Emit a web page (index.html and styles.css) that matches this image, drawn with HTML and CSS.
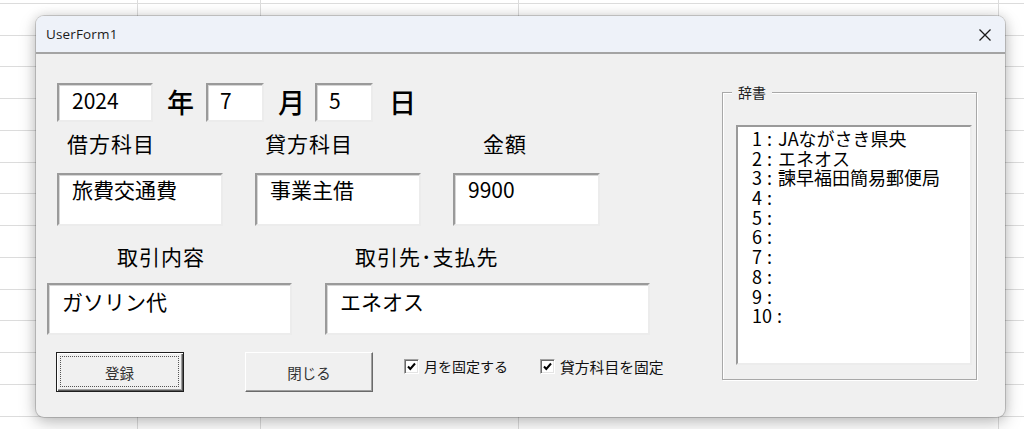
FILE: index.html
```html
<!DOCTYPE html>
<html lang="ja">
<head>
<meta charset="utf-8">
<title>UserForm1</title>
<link rel="stylesheet" href="styles.css">
</head>
<body>
<div class="dialog">
  <div class="titlebar">
    <span class="title">UserForm1</span>
    <span class="close">
      <svg width="14" height="14" viewBox="0 0 14 14"><path d="M1.5 1.5 L12.5 12.5 M12.5 1.5 L1.5 12.5" stroke="#1a1a1a" stroke-width="1.3" fill="none"/></svg>
    </span>
  </div>
  <div class="body">
    <div class="left">
      <div class="date-row">
        <div class="tb tb-year">2024</div>
        <span class="unit u-year">年</span>
        <div class="tb tb-small">7</div>
        <span class="unit u-month">月</span>
        <div class="tb tb-small">5</div>
        <span class="unit u-day">日</span>
      </div>
      <div class="fields fields-1">
        <div class="field f-debit">
          <div class="lbl">借方科目</div>
          <div class="tb tb-tall">旅費交通費</div>
        </div>
        <div class="field f-credit">
          <div class="lbl">貸方科目</div>
          <div class="tb tb-tall">事業主借</div>
        </div>
        <div class="field f-amount">
          <div class="lbl">金額</div>
          <div class="tb tb-tall">9900</div>
        </div>
      </div>
      <div class="fields fields-2">
        <div class="field f-desc">
          <div class="lbl">取引内容</div>
          <div class="tb tb-wide">ガソリン代</div>
        </div>
        <div class="field f-payee">
          <div class="lbl">取引先･支払先</div>
          <div class="tb tb-wide">エネオス</div>
        </div>
      </div>
      <div class="actions">
        <div class="btn btn-default"><span class="focus">登録</span></div>
        <div class="btn btn-close">閉じる</div>
        <label class="chk chk-1"><span class="box"><svg width="11" height="11" viewBox="0 0 11 11"><path d="M2 5.5 L4.3 8 L9 2.5" stroke="#000" stroke-width="2" fill="none"/></svg></span>月を固定する</label>
        <label class="chk chk-2"><span class="box"><svg width="11" height="11" viewBox="0 0 11 11"><path d="M2 5.5 L4.3 8 L9 2.5" stroke="#000" stroke-width="2" fill="none"/></svg></span>貸方科目を固定</label>
      </div>
    </div>
    <div class="frame">
      <span class="legend">辞書</span>
      <div class="listbox">
        <div class="item"><span class="n">1</span><span class="c">:</span>JAながさき県央</div>
        <div class="item"><span class="n">2</span><span class="c">:</span>エネオス</div>
        <div class="item"><span class="n">3</span><span class="c">:</span>諫早福田簡易郵便局</div>
        <div class="item"><span class="n">4</span><span class="c">:</span></div>
        <div class="item"><span class="n">5</span><span class="c">:</span></div>
        <div class="item"><span class="n">6</span><span class="c">:</span></div>
        <div class="item"><span class="n">7</span><span class="c">:</span></div>
        <div class="item"><span class="n">8</span><span class="c">:</span></div>
        <div class="item"><span class="n">9</span><span class="c">:</span></div>
        <div class="item"><span class="n">10</span><span class="c">:</span></div>
      </div>
    </div>
  </div>
</div>
</body>
</html>
```

FILE: styles.css
```css
html, body {
  margin: 0;
  padding: 0;
}
body {
  width: 1024px;
  height: 429px;
  overflow: hidden;
  position: relative;
  background-color: #ffffff;
  background-image:
    linear-gradient(90deg, transparent 0 137px, #dcdcdc 137px 138px, transparent 138px 260px, #dcdcdc 260px 261px, transparent 261px 518px, #dcdcdc 518px 519px, transparent 519px 998px, #dcdcdc 998px 999px, transparent 999px),
    repeating-linear-gradient(180deg, transparent 0 3px, #dcdcdc 3px 4px, transparent 4px 31.75px);
  font-family: "Noto Sans CJK JP", "Noto Sans", sans-serif;
  color: #000;
}

.dialog {
  position: absolute;
  left: 36px;
  top: 16px;
  width: 969px;
  height: 401px;
  border-radius: 8px;
  overflow: hidden;
  background: #f0f0f0;
  box-shadow: 0 0 0 1px rgba(0,0,0,0.16), 0 6px 18px rgba(0,0,0,0.22), 0 0 12px rgba(0,0,0,0.14);
  display: flex;
  flex-direction: column;
}

.titlebar {
  height: 36px;
  flex: 0 0 36px;
  background: #eef2f9;
  border-bottom: 2px solid #a4a4a4;
  display: flex;
  align-items: center;
  justify-content: space-between;
  padding: 0 13px 0 10px;
}
.title {
  font-family: "Open Sans", "Noto Sans", sans-serif;
  font-size: 13.5px;
  color: #1a1a1a;
  letter-spacing: 0.15px;
}
.close {
  display: flex;
  width: 14px;
  height: 14px;
  margin-top: 1px;
}

.body {
  flex: 1;
  display: flex;
  align-items: flex-start;
}

.left {
  flex: 0 0 686px;
  display: flex;
  flex-direction: column;
}

/* sunken text box */
.tb {
  box-sizing: border-box;
  background: #fff;
  border: 2px solid;
  border-color: #9a9a9a #ececec #ececec #9a9a9a;
  box-shadow: inset 1px 1px 0 #d6d6d6;
  font-size: 21px;
  line-height: 26px;
  white-space: nowrap;
}

.date-row {
  display: flex;
  align-items: center;
  margin: 29px 0 0 21px;
  height: 39px;
}
.date-row .tb {
  height: 39px;
  padding: 2px 0 0 13px;
  font-size: 21px;
}
.tb-year { width: 96px; }
.tb-small { width: 58px; padding-left: 12px !important; }
.unit {
  font-size: 27px;
  font-weight: 500;
  line-height: 30px;
}
.u-year { margin: -2px 12px 0 14px; }
.u-month { margin: -2px 10px 0 14px; }
.u-day { margin: -2px 0 0 16px; }

.fields {
  display: flex;
}
.fields-1 {
  margin: 9px 0 0 21px;
  gap: 32px;
}
.fields-2 {
  margin: 18px 0 0 11px;
  gap: 33px;
}
.field {
  display: flex;
  flex-direction: column;
}
.lbl {
  font-size: 21px;
  line-height: 24px;
  height: 24px;
  letter-spacing: 1px;
  white-space: nowrap;
}
.fields-1 .lbl { margin-bottom: 18px; }
.fields-2 .lbl { margin-bottom: 15px; }
.f-debit .lbl, .f-credit .lbl { padding-left: 10px; }
.f-amount .lbl { padding-left: 30px; }
.f-desc .lbl { padding-left: 70px; }
.f-payee .lbl { padding-left: 30px; }

.tb-tall {
  height: 53px;
  padding: 1px 0 0 13px;
}
.f-debit .tb, .f-credit .tb { width: 166px; }
.f-amount .tb { width: 147px; }
.tb-wide {
  height: 52px;
  padding: 3px 0 0 13px;
}
.f-desc .tb { width: 245px; }
.f-payee .tb { width: 325px; }

.actions {
  display: flex;
  align-items: center;
  margin: 17px 0 0 20px;
  height: 40px;
}
.btn {
  box-sizing: border-box;
  width: 128px;
  height: 40px;
  display: flex;
  align-items: center;
  justify-content: center;
  font-size: 14.5px;
  color: #333;
  background: #f0f0f0;
}
.btn-default {
  border: 1px solid #1e1e1e;
  box-shadow: inset 1px 1px 0 #ffffff, inset -1px -1px 0 #5a5a5a, inset -2px -2px 0 #a0a0a0;
  padding: 3px 4px 4px 3px;
}
.btn-default .focus {
  flex: 1;
  align-self: stretch;
  display: flex;
  align-items: center;
  justify-content: center;
  border: 1px dotted #555;
  padding-top: 1px;
}
.btn-close {
  margin-left: 61px;
  border: 1px solid;
  border-color: #ffffff #6a6a6a #6a6a6a #ffffff;
  box-shadow: inset -1px -1px 0 #a0a0a0;
  padding-top: 1px;
}

.chk {
  display: flex;
  align-items: center;
  font-size: 14px;
  color: #111;
  white-space: nowrap;
  margin-top: -12px;
}
.chk-1 { margin-left: 31px; }
.chk-2 { margin-left: 32px; font-size: 14.8px; }
.box {
  box-sizing: border-box;
  width: 15px;
  height: 15px;
  background: #fff;
  border: 1px solid;
  border-color: #a0a0a0 #ffffff #ffffff #a0a0a0;
  box-shadow: inset 1px 1px 0 #696969, inset -1px -1px 0 #e3e3e3;
  display: flex;
  align-items: center;
  justify-content: center;
  margin-right: 5px;
}

/* frame */
.frame {
  position: relative;
  box-sizing: border-box;
  margin-top: 38px;
  width: 255px;
  height: 288px;
  border: 1px solid #a8a8a8;
  box-shadow: inset 1px 1px 0 #ffffff, 1px 1px 0 #ffffff;
  padding: 32px 4px 0 13px;
}
.legend {
  position: absolute;
  left: 9px;
  top: -11px;
  padding: 0 6px;
  background: #f0f0f0;
  font-size: 14px;
  line-height: 20px;
  color: #222;
}
.listbox {
  box-sizing: border-box;
  width: 236px;
  height: 240px;
  background: #fff;
  border: 2px solid;
  border-color: #9a9a9a #ececec #ececec #9a9a9a;
  padding: 2px 0 0 14px;
}
.item {
  display: flex;
  font-size: 18px;
  line-height: 19.7px;
  height: 19.7px;
  white-space: nowrap;
}
.item .c {
  margin: 0 6px 0 5px;
}
```
